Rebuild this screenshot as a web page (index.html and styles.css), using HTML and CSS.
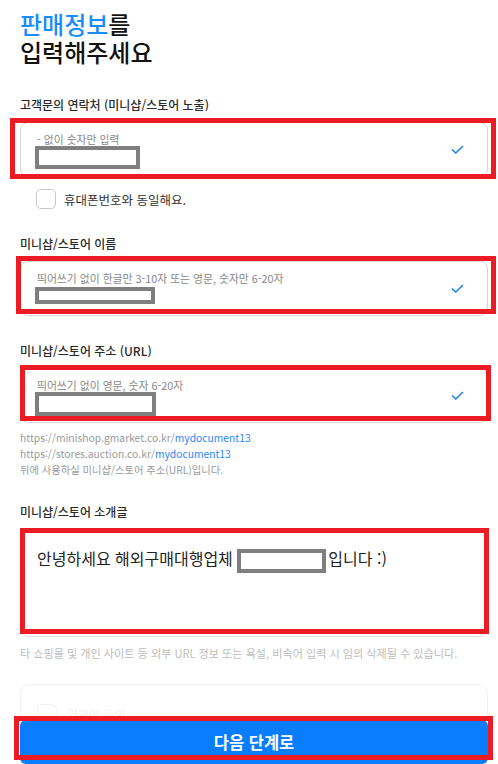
FILE: index.html
```html
<!DOCTYPE html>
<html lang="ko">
<head>
    <meta charset="UTF-8">
    <meta name="viewport" content="width=device-width, initial-scale=1.0">
    <title>판매정보 입력</title>
    <link rel="stylesheet" href="styles.css">
</head>
<body>
    <div class="page">
        <h1 class="title"><span class="accent">판매정보</span>를<br>입력해주세요</h1>

        <!-- 연락처 -->
        <div class="label label-first">고객문의 연락처 (미니샵/스토어 노출)</div>
        <div class="field mark mark-1">
            <div class="field-body">
                <div class="hint">- 없이 숫자만 입력</div>
                <div class="redact redact-1"></div>
            </div>
            <svg class="check" width="13" height="9" viewBox="0 0 13 9"><path d="M1 4.5 L4.8 8 L12 1" fill="none" stroke="#1a7ef5" stroke-width="1.5"/></svg>
        </div>
        <label class="same">
            <span class="box"></span>
            <span>휴대폰번호와 동일해요.</span>
        </label>

        <!-- 이름 -->
        <div class="label">미니샵/스토어 이름</div>
        <div class="field mark mark-2">
            <div class="field-body">
                <div class="hint">띄어쓰기 없이 한글만 3-10자 또는 영문, 숫자만 6-20자</div>
                <div class="redact redact-2"></div>
            </div>
            <svg class="check" width="13" height="9" viewBox="0 0 13 9"><path d="M1 4.5 L4.8 8 L12 1" fill="none" stroke="#1a7ef5" stroke-width="1.5"/></svg>
        </div>

        <!-- 주소 -->
        <div class="label">미니샵/스토어 주소 (URL)</div>
        <div class="field mark mark-3">
            <div class="field-body">
                <div class="hint">띄어쓰기 없이 영문, 숫자 6-20자</div>
                <div class="redact redact-3"></div>
            </div>
            <svg class="check" width="13" height="9" viewBox="0 0 13 9"><path d="M1 4.5 L4.8 8 L12 1" fill="none" stroke="#1a7ef5" stroke-width="1.5"/></svg>
        </div>
        <div class="help">
            <div>https://minishop.gmarket.co.kr/<span class="link">mydocument13</span></div>
            <div>https://stores.auction.co.kr/<span class="link">mydocument13</span></div>
            <div>뒤에 사용하실 미니샵/스토어 주소(URL)입니다.</div>
        </div>

        <!-- 소개글 -->
        <div class="label label-intro">미니샵/스토어 소개글</div>
        <div class="textarea mark mark-4">
            안녕하세요 해외구매대행업체 <span class="redact redact-4"></span>입니다 :)
        </div>
        <div class="notice">타 쇼핑몰 및 개인 사이트 등 외부 URL 정보 또는 욕설, 비속어 입력 시 임의 삭제될 수 있습니다.</div>

        <div class="agree-card">
            <span class="box"></span>
            <span>약관에 동의</span>
        </div>
    </div>

    <div class="bottom-bar">
        <button class="next mark mark-5">다음 단계로</button>
    </div>
</body>
</html>
```

FILE: styles.css
```css
body {
    font-family: "Noto Sans CJK KR", "Noto Sans", sans-serif;
    background-color: #fff;
    color: #222;
    margin: 0;
    padding: 0;
}
.page {
    padding: 10px 10px 0 20px;
    height: 754px;
    overflow: hidden;
}
.title {
    margin: 0;
    font-size: 24px;
    line-height: 28px;
    font-weight: 500;
    color: #111;
}
.title .accent {
    color: #1a8cff;
}
.label {
    font-size: 12px;
    line-height: 16px;
    font-weight: 500;
    color: #2a2a2a;
    margin: 27px 0 9px;
}
.label-first {
    margin-top: 31px;
}
.label-intro {
    margin-top: 26px;
}
.field {
    display: flex;
    align-items: flex-start;
    height: 55px;
    box-sizing: border-box;
    border: 1px solid #d6d6d6;
    border-radius: 8px;
    padding: 9px 23px 0 16px;
}
.field-body {
    flex: 1;
}
.hint {
    font-size: 10.8px;
    line-height: 14px;
    color: #888;
}
.check {
    margin-top: 13px;
}
.redact {
    display: inline-block;
    box-sizing: border-box;
    border: 4px solid #7f7f7f;
    background: #fff;
    margin-left: -2px;
}
.redact-1 { width: 105px; height: 23px; }
.redact-2 { width: 120px; height: 17px; margin-top: 2px; }
.redact-3 { width: 121px; height: 24px; }
.redact-4 { width: 89px; height: 24px; margin: 0 2px 0 0; vertical-align: middle; }

.mark {
    position: relative;
}
.mark::after {
    content: "";
    position: absolute;
    border: 5px solid #ed1c24;
    pointer-events: none;
}
.mark-1::after { left: -11px; right: -9px; top: -5px; bottom: -3px; }
.mark-2::after { left: -5px; right: -9px; top: -6px; bottom: 1px; }
.mark-3::after { left: -1px; right: -4px; top: -4px; bottom: 1px; }
.mark-4::after { left: -1px; right: -2px; top: -2px; bottom: 2px; }
.mark-5::after { left: -6px; right: -5px; top: -4px; bottom: 4px; }

.same {
    display: flex;
    align-items: center;
    gap: 8px;
    margin: 12px 0 0 16px;
    font-size: 12.5px;
    color: #333;
}
.box {
    width: 20px;
    height: 20px;
    box-sizing: border-box;
    border: 1px solid #c8c8c8;
    border-radius: 5px;
}
.help {
    margin-top: 7px;
    font-size: 10.3px;
    line-height: 16px;
    color: #9a9a9a;
}
.help .link {
    color: #2a86ff;
}
.textarea {
    height: 108px;
    box-sizing: border-box;
    border: 1px solid #e2e2e2;
    border-radius: 8px;
    padding: 17px 16px 0;
    font-size: 16px;
    line-height: 22px;
    color: #222;
}
.notice {
    margin-top: 9px;
    font-size: 11.1px;
    line-height: 14px;
    color: #bdbdbd;
}
.agree-card {
    display: flex;
    align-items: center;
    gap: 10px;
    margin-top: 24px;
    height: 80px;
    box-sizing: border-box;
    border: 1px solid #f0f0f0;
    border-radius: 10px;
    padding: 0 16px 20px;
    font-size: 12px;
    color: #f2f2f2;
}
.agree-card .box {
    border-color: #f2f2f2;
}
.bottom-bar {
    position: fixed;
    left: 20px;
    right: 10px;
    bottom: 0;
}
.next {
    display: block;
    width: 100%;
    height: 44px;
    border: none;
    border-radius: 6px;
    background-color: #087dff;
    color: #fff;
    font-family: "Noto Sans CJK KR", sans-serif;
    font-size: 16.5px;
    font-weight: 700;
}
```
